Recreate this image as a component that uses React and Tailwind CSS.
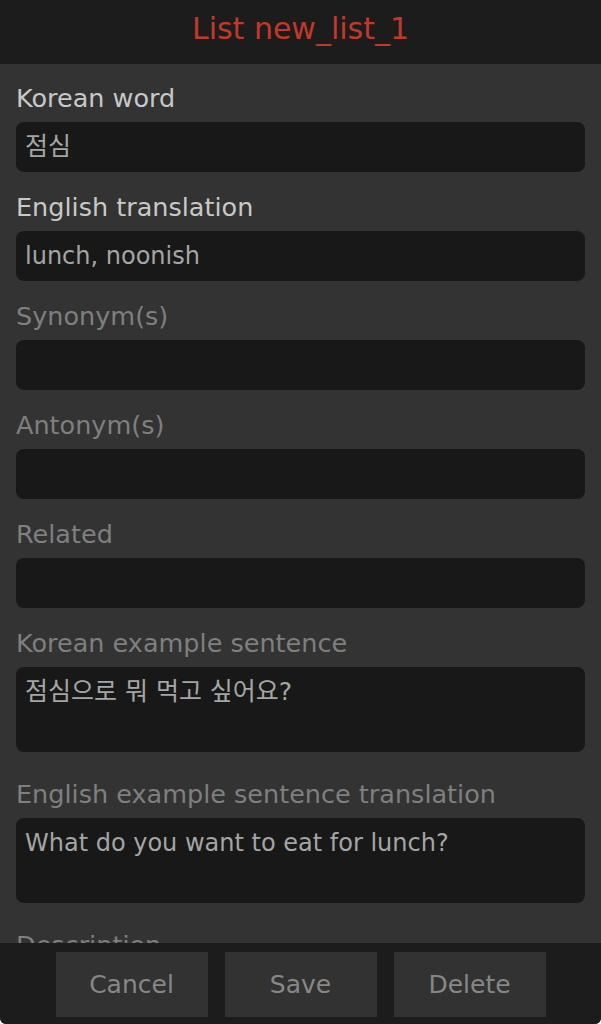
const fields = [
  { label: 'Korean word', value: '점심', strong: true, ko: true },
  { label: 'English translation', value: 'lunch, noonish', strong: true },
  { label: 'Synonym(s)', value: '' },
  { label: 'Antonym(s)', value: '' },
  { label: 'Related', value: '' },
];

const areas = [
  { label: 'Korean example sentence', value: '점심으로 뭐 먹고 싶어요?', ko: true },
  { label: 'English example sentence translation', value: 'What do you want to eat for lunch?' },
];

export default function App() {
  return (
    <div className="bg-white">
      <div className="h-[1024px] flex flex-col bg-[#333333] overflow-hidden rounded-b-[6px] font-['DejaVu_Sans','Noto_Sans_CJK_KR',sans-serif]">
        <header className="h-16 shrink-0 bg-[#1c1c1c] flex items-center justify-center">
          <h1 className="text-[30px] leading-8 text-[#c0392b] -mt-1.5">List new_list_1</h1>
        </header>

        <main className="flex-1 overflow-hidden px-4 pt-5">
          {fields.map((f) => (
            <div key={f.label} className="mb-[21px]">
              <label className={`block text-[25.5px] leading-7 ${f.strong ? 'text-[#c8c8c8]' : 'text-[#7f7f7f]'}`}>
                {f.label}
              </label>
              <div
                className={`mt-[10px] h-[50px] rounded-lg bg-[#181818] px-[9px] flex items-center text-[#a5a5a5] ${f.ko ? 'text-[25px]' : 'text-[24px]'}`}
              >
                {f.value}
              </div>
            </div>
          ))}
          {areas.map((a) => (
            <div key={a.label} className="mb-7">
              <label className="block text-[25.5px] leading-7 text-[#7f7f7f]">{a.label}</label>
              <div
                className={`mt-[10px] h-[85px] rounded-lg bg-[#181818] px-[9px] pt-[11px] leading-7 text-[#a5a5a5] ${a.ko ? 'text-[25px]' : 'text-[24px]'}`}
              >
                {a.value}
              </div>
            </div>
          ))}
          <label className="block text-[25.5px] leading-7 text-[#7f7f7f]">Description</label>
        </main>

        <footer className="h-[81px] shrink-0 bg-[#1c1c1c] flex justify-center gap-[17px] pt-[9px]">
          {['Cancel', 'Save', 'Delete'].map((b) => (
            <button key={b} className="w-[152px] h-[65px] bg-[#323232] text-[25px] text-[#878787]">
              {b}
            </button>
          ))}
        </footer>
      </div>
    </div>
  );
}
